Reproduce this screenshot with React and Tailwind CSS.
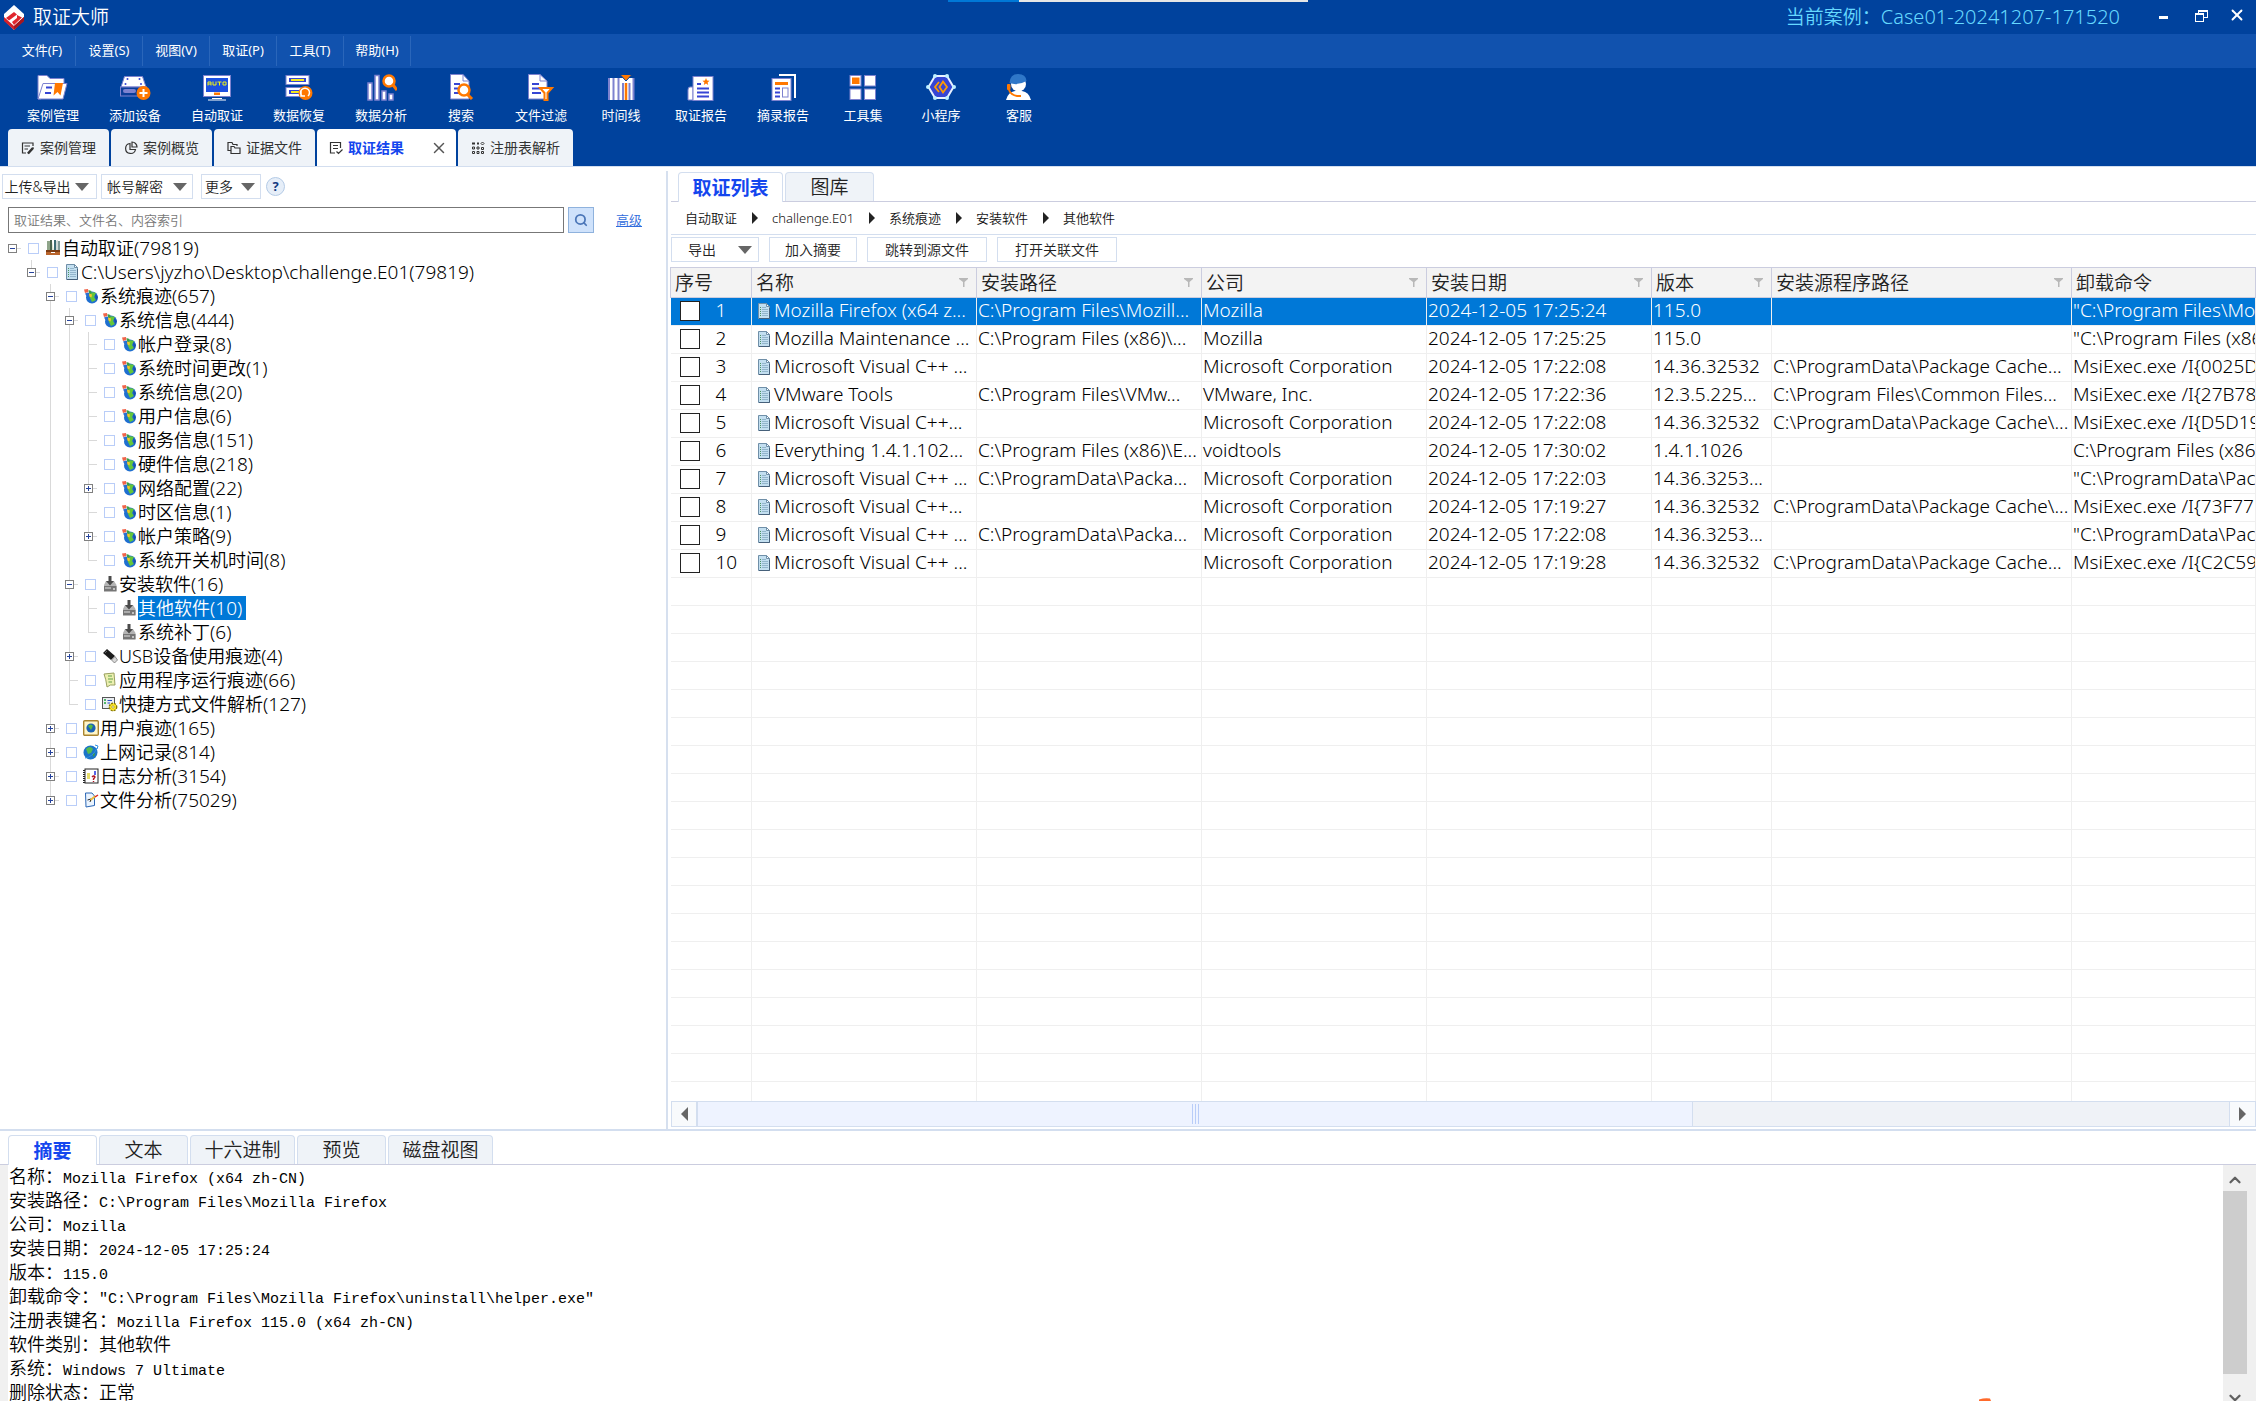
import React from "react";
import { X, ChevronUp, ChevronDown, Search } from "lucide-react";

/* ---------- toolbar icons (32 x 28) ---------- */
const P = "#7d82cf";
const B = "#3645d4";
const O = "#ff7800";

const Tool = ({ children }) => (
  <svg width="32" height="28" viewBox="0 0 32 28" aria-hidden="true">{children}</svg>
);

const toolIcons = {
  cases: (
    <Tool>
      <path d="M1 26V2.500H10L13 5.500H27V12H8L4 26Z" fill="#fff" stroke={P} />
      <path d="M6 10.500H30L26 26H1Z" fill="#fff" stroke={P} />
      <path d="M9 14.500H15M8 20H14" stroke={B} strokeWidth="2" />
      <path d="M18 10H26L23.500 22.500L20.500 19L16.500 22.500Z" fill={O} />
    </Tool>
  ),
  add: (
    <Tool>
      <path d="M5.500 3.500H23.500L27 14H2Z" fill="#fff" stroke={P} />
      <circle cx="8.500" cy="6" r="1" fill={B} /><circle cx="20.500" cy="6" r="1" fill={B} />
      <circle cx="6.500" cy="11" r="1" fill={B} /><circle cx="22" cy="11" r="1" fill={B} />
      <rect x="1.500" y="14" width="26" height="9" fill="#0b3d99" stroke={P} />
      <rect x="4" y="16" width="13" height="4" rx="2" fill={P} />
      <circle cx="24.500" cy="20" r="7" fill={O} />
      <path d="M24.500 16V24M20.500 20H28.500" stroke="#fff" strokeWidth="2" />
    </Tool>
  ),
  auto: (
    <Tool>
      <rect x="2.500" y="2.500" width="27" height="21" fill="#fff" stroke={P} />
      <rect x="5" y="5" width="22" height="14" fill="#1c50e0" />
      <path d="M7 12.500V9H10V12.500M7 11H10M12 8.500V12H15V8.500M16.500 9H20.500M18.500 9V12.500M22 9H25V12H22Z" fill="none" stroke="#f3f315" />
      <rect x="13" y="19.500" width="6" height="2.500" fill={O} />
      <path d="M11 25.500H21M7 27H25" stroke="#fff" />
    </Tool>
  ),
  recover: (
    <Tool>
      <rect x="3" y="2.500" width="23" height="9" fill="#fff" stroke={P} />
      <path d="M6 7H23" stroke={B} strokeWidth="4" />
      <path d="M8 7H21" stroke="#f4ea1f" strokeWidth="2" />
      <rect x="3" y="14.500" width="23" height="9" fill="#fff" stroke={P} />
      <path d="M6 19H16" stroke={B} strokeWidth="4" />
      <path d="M8 19H16" stroke="#f4ea1f" strokeWidth="2" />
      <circle cx="22.500" cy="20" r="7" fill={O} />
      <path d="M19 23A4.500 4.500 0 1 1 25 23M18 18V23H22" fill="none" stroke="#fff" strokeWidth="1.500" />
    </Tool>
  ),
  analyse: (
    <Tool>
      <g fill="#fff" stroke={P} strokeWidth="1.500">
        <rect x="3" y="10" width="4" height="17" />
        <rect x="10" y="2.500" width="4" height="24.500" />
        <rect x="17" y="18" width="4" height="9" />
        <rect x="24" y="21" width="4" height="6" />
      </g>
      <path d="M28 12L32 17" stroke={O} strokeWidth="3" />
      <circle cx="24" cy="8" r="5.500" fill="#fff" stroke={O} strokeWidth="2.500" />
    </Tool>
  ),
  search: (
    <Tool>
      <path d="M5.500 1.500H18L24 8V26H5.500Z" fill="#fff" stroke={P} />
      <path d="M18 1.500V8H24" fill="none" stroke={P} />
      <path d="M9 11H15M9 15.500H14M9 20H15" stroke={B} strokeWidth="1.800" />
      <path d="M22 21L27 26" stroke={O} strokeWidth="3" />
      <circle cx="19" cy="17" r="5.500" fill="#fff" stroke={O} strokeWidth="2.500" />
    </Tool>
  ),
  filter: (
    <Tool>
      <path d="M3.500 1.500H15L22 8V26H3.500Z" fill="#fff" stroke={P} />
      <path d="M15 1.500V8H22" fill="none" stroke={P} />
      <path d="M7 11H14M7 15.500H15M7 20H16" stroke={B} strokeWidth="1.800" />
      <path d="M15 15H27L22.500 20V27H19.500V20Z" fill="#fff" stroke={O} strokeWidth="2" />
    </Tool>
  ),
  timeline: (
    <Tool>
      <rect x="3" y="5" width="26" height="22" fill="#fff" />
      <path d="M4 5V27M8.500 5V27M13.500 5V27M18 10V27M24.500 10V27M28.500 5V27" stroke={P} strokeWidth="2" />
      <path d="M21 10V27" stroke={O} strokeWidth="2.500" />
      <path d="M15 1.500H27L21 8Z" fill={O} stroke="#00429d" />
    </Tool>
  ),
  report: (
    <Tool>
      <path d="M8 14H5Q3 14 3 17V27H8Z" fill="#fff" stroke={P} />
      <rect x="8" y="3.500" width="20" height="24" fill="#fff" stroke={P} />
      <path d="M12 11H16M12 15.500H24M12 19.500H24M12 23.500H24" stroke={B} strokeWidth="1.800" />
      <path d="M21 5L22 7.500L24.500 7.800L22.600 9.500L23.200 12L21 10.600L18.800 12L19.400 9.500L17.500 7.800L20 7.500Z" fill={O} />
    </Tool>
  ),
  excerpt: (
    <Tool>
      <path d="M12 2H28V25" fill="none" stroke="#fff" strokeWidth="2" />
      <rect x="5" y="5.500" width="19" height="22" fill="#fff" stroke={P} />
      <path d="M8 10.500H21" stroke={O} strokeWidth="3" />
      <path d="M8 15.500H13M8 19.500H13M8 23.500H13" stroke={B} strokeWidth="1.800" />
      <rect x="15.500" y="15" width="5.500" height="9" fill="#fff" stroke={P} />
    </Tool>
  ),
  tools: (
    <Tool>
      <g fill="#fff" stroke={P}>
        <rect x="3" y="2.500" width="11" height="10.500" /><rect x="17.500" y="2.500" width="11" height="10.500" />
        <rect x="3" y="16" width="11" height="10.500" /><rect x="17.500" y="16" width="11" height="10.500" />
      </g>
      <rect x="5" y="4.500" width="7.500" height="6.500" fill={O} />
    </Tool>
  ),
  mini: (
    <Tool>
      <path d="M10 3H22L28.500 14L22 25H10L3.500 14Z" fill={B} stroke="#e8f2ff" strokeWidth="2" />
      <g fill="#bff0ff"><circle cx="10" cy="3" r="2" /><circle cx="22" cy="3" r="2" /><circle cx="29" cy="14" r="2" /><circle cx="22" cy="25" r="2" /><circle cx="10" cy="25" r="2" /><circle cx="3" cy="14" r="2" /></g>
      <path d="M14 9L10 14L14 19M18 8.500L22 14L18 19.500L14.500 14Z" fill="none" stroke="#ff9a00" strokeWidth="1.800" />
    </Tool>
  ),
  service: (
    <Tool>
      <path d="M3 27Q5 19 12 18H19Q26 19 28 27Z" fill="#fff" />
      <circle cx="15.500" cy="11" r="7.500" fill="#fff" />
      <path d="M6.500 10Q7 1 15 1Q23 1 23.500 8Q15 13 6.500 10Z" fill="#2f77c8" />
      <rect x="4" y="11" width="3.500" height="6" rx="1" fill={O} />
      <path d="M6 17Q8 22 14 23H18" fill="none" stroke={O} strokeWidth="2" />
    </Tool>
  ),
};

const tools = [
  ["案例管理", "cases"], ["添加设备", "add"], ["自动取证", "auto"], ["数据恢复", "recover"],
  ["数据分析", "analyse"], ["搜索", "search"], ["文件过滤", "filter"], ["时间线", "timeline"],
  ["取证报告", "report"], ["摘录报告", "excerpt"], ["工具集", "tools"], ["小程序", "mini"], ["客服", "service"],
];

/* ---------- page tab icons (14 x 14) ---------- */
const Line14 = ({ children }) => (
  <svg width="14" height="14" viewBox="0 0 14 14" fill="none" stroke="#333" strokeWidth="1.200" aria-hidden="true">{children}</svg>
);
const pageTabs = [
  { label: "案例管理", icon: <Line14><path d="M5 12H1.500V2H12V5M3.500 5H9M3.500 8H7M7 12.500L12.500 6.500" /><path d="M7 12.500L12 7" strokeWidth="2.500" /></Line14> },
  { label: "案例概览", icon: <Line14><path d="M6 2.500A5 5 0 1 0 11.500 8.500H6Z" /><path d="M8 1V6H13A5 5 0 0 0 8 1Z" /></Line14> },
  { label: "证据文件", icon: <Line14><path d="M4 9.500H1V1.500H5L6 3.500H10V5" /><path d="M4 12.500V5.500H7L8 7H13V12.500Z" /></Line14> },
  { label: "取证结果", active: true, icon: <Line14><path d="M6 12H1.500V1.500H11.500V7M4 4.500H9M4 7.500H9M7.500 10.500L9.500 12.500L13.500 8.500" /></Line14> },
  { label: "注册表解析", icon: <Line14><path d="M1 2.500H4M6 2.500H8" strokeWidth="2" /><path d="M1.500 6H3.500V8H1.500ZM6 6H8V8H6ZM1.500 10.500H3.500V12.500H1.500ZM6 10.500H8V12.500H6ZM10.500 6.500H12.500V8.500H10.500ZM10.500 10.500H12.500V12.500H10.500Z" strokeWidth="1" /><path d="M11.500 1L13 2.500L11.500 4L10 2.500Z" strokeWidth="1" /></Line14> },
];

/* ---------- tree icons (16 x 16) ---------- */
const S16 = ({ children }) => (
  <svg width="16" height="16" viewBox="0 0 16 16" className="shrink-0" aria-hidden="true">{children}</svg>
);
const treeIcons = {
  shelf: <S16><path d="M2 1H5V11H2Z" fill="#8fa58a" /><path d="M5 0H7V11H5Z" fill="#49634e" /><path d="M7 1L9 11H7Z" fill="#d9e4d0" /><path d="M9 0H11V11H9Z" fill="#3b6b74" /><path d="M11 1L13 0V11H11Z" fill="#cfd9d6" /><path d="M13 1H15V11H13Z" fill="#7f9a97" /><path d="M1 10H15V15H1Z" fill="#b9642b" /><path d="M1 10H15V12H1Z" fill="#7c3c14" /><rect x="6" y="12" width="4" height="1" fill="#fff" /></S16>,
  doc: <S16><path d="M2.500 .5H10.500L13.500 3.500V15.500H2.500Z" fill="#c3dff0" stroke="#6f8fa8" /><path d="M10.500 .5V3.500H13.500Z" fill="#fff" stroke="#6f8fa8" /><path d="M13.500 5V15.500H3" fill="none" stroke="#46607a" /><path d="M4.500 4V13" stroke="#4c9560" strokeDasharray="1 1" /><path d="M6 4.500H10M6 6.500H12M6 8.500H12M6 10.500H12M6 12.500H12" stroke="#93b5cc" /></S16>,
  globe: <S16><circle cx="9" cy="9.500" r="6" fill="#1f6fd0" /><path d="M6 6Q9 3 13 5L11 9L13 12L9 14L7 10Z" fill="#63c63a" /><path d="M12 6L15 9L13 13Z" fill="#1a4fae" /><path d="M1 1.500L5 1L5.500 4L2 5Z" fill="#f0644a" /><path d="M5.500 2L8.500 3L8 6L6 5Z" fill="#3aa047" /><path d="M2 5.500L5 4.500L6 8L3.500 8Z" fill="#2d6fd0" /><path d="M6 5.500L9 6.500L8.500 9.500L6.500 8.500Z" fill="#f7c52d" /></S16>,
  disk: <S16><path d="M2 9L4 5H12L14.500 9V15H2V10Z" fill="#b4b4b4" /><path d="M2 10H14.500V15.500H2Z" fill="#767676" /><path d="M3 12H9" stroke="#e2e2e2" /><circle cx="12" cy="13" r="1" fill="#ddd" /><path d="M6.500 0H9.500V5H12L8 9.500L4 5H6.500Z" fill="#4a4a4a" /></S16>,
  usb: <S16><path d="M1 5L5 1L13 8L9 12Z" fill="#1c1c1c" /><path d="M9.500 12L13 8.500L15.500 12L12.500 15Z" fill="#d8d8d8" stroke="#666" strokeWidth=".7" /><path d="M3 5L5 3" stroke="#666" /></S16>,
  note: <S16><path d="M2 2L12 1L13 13Q8 12 5 15Q4 7 2 2Z" fill="#ecf0b0" stroke="#9aa060" /><path d="M6 4H10M6 7H11M6.500 10H10" stroke="#63a04a" /></S16>,
  link: <S16><rect x=".5" y="1.500" width="12" height="11" fill="#e9edf2" stroke="#555" /><path d="M2 4H4M2 7H4" stroke="#1ea53a" strokeWidth="1.500" /><path d="M5.500 4.500H10M5.500 7H8" stroke="#2849c0" /><circle cx="11" cy="11" r="3.700" fill="#ffe92b" stroke="#8a7a00" strokeDasharray="2 1" strokeWidth="1.400" /><circle cx="11" cy="11" r="1.200" fill="#fff" stroke="#8a7a00" strokeWidth=".6" /></S16>,
  user: <S16><rect x=".7" y=".7" width="14.600" height="14.600" rx="1" fill="#fff6c8" stroke="#a9842f" strokeWidth="1.400" /><circle cx="8" cy="8" r="4.600" fill="#1b62b5" /><path d="M5 6Q8 3 10 6L8 10Z" fill="#56b843" /></S16>,
  earth: <S16><circle cx="7.500" cy="8.500" r="7" fill="#1b74c8" /><path d="M3 5Q7 1 10 5L8 9L5 10Z" fill="#55bb50" /><path d="M9 10L12 9L11 13Z" fill="#3d9e45" /><path d="M12 1L15 2L14 5M2 14Q10 13 14 4" fill="none" stroke="#2f8fe0" /></S16>,
  log: <S16><rect x="2" y="1" width="13" height="14" fill="#fff" stroke="#222" /><path d="M1 2V15" stroke="#222" strokeWidth="2" strokeDasharray="1 1" /><rect x="4" y="5" width="3" height="6" fill="#e6dd69" /><path d="M12 3V7" stroke="#2030e0" strokeWidth="1.500" /><path d="M9 9Q11 7 12 9L10.500 11V12M10.500 13V14" fill="none" stroke="#b01020" strokeWidth="1.400" /></S16>,
  edit: <S16><path d="M2.500 1H9L11.500 4V13.500L3 15Z" fill="#eaf4ff" stroke="#2a66b5" /><path d="M4.500 8L8 7L7 10" fill="none" stroke="#222" /><path d="M7.500 8L12.500 4" stroke="#e9b93a" strokeWidth="2" /><path d="M12 5L15 3" stroke="#d22" strokeWidth="1.500" /></S16>,
};

/* level, state, icon, name, count, last sibling */
const tree = [
  [0, "-", "shelf", "自动取证", 79819],
  [1, "-", "doc", "C:\\Users\\jyzho\\Desktop\\challenge.E01", 79819, true],
  [2, "-", "globe", "系统痕迹", 657],
  [3, "-", "globe", "系统信息", 444],
  [4, "", "globe", "帐户登录", 8],
  [4, "", "globe", "系统时间更改", 1],
  [4, "", "globe", "系统信息", 20],
  [4, "", "globe", "用户信息", 6],
  [4, "", "globe", "服务信息", 151],
  [4, "", "globe", "硬件信息", 218],
  [4, "+", "globe", "网络配置", 22],
  [4, "", "globe", "时区信息", 1],
  [4, "+", "globe", "帐户策略", 9],
  [4, "", "globe", "系统开关机时间", 8, true],
  [3, "-", "disk", "安装软件", 16],
  [4, "", "disk", "其他软件", 10],
  [4, "", "disk", "系统补丁", 6, true],
  [3, "+", "usb", "USB设备使用痕迹", 4],
  [3, "", "note", "应用程序运行痕迹", 66],
  [3, "", "link", "快捷方式文件解析", 127, true],
  [2, "+", "user", "用户痕迹", 165],
  [2, "+", "earth", "上网记录", 814],
  [2, "+", "log", "日志分析", 3154],
  [2, "+", "edit", "文件分析", 75029, true],
];

function Pipe({ visible }) {
  return (
    <span className="flex h-6 w-[19px] shrink-0 justify-center">
      {visible && <span className="w-px bg-[#d9d9d9]" />}
    </span>
  );
}

function Joint({ level, state, last }) {
  return (
    <svg width="19" height="24" viewBox="0 0 19 24" className="shrink-0" shapeRendering="crispEdges" aria-hidden="true">
      {level > 0 && <path d="M9.500 0V12" stroke="#d9d9d9" />}
      {level > 0 && !last && <path d="M9.500 12V24" stroke="#d9d9d9" />}
      <path d="M9 12.500H18" stroke="#d9d9d9" />
      {state && <rect x="5.500" y="8.500" width="8" height="8" fill="#fff" stroke="#808080" />}
      {state && <path d="M7 12.500H12" stroke="#26439c" />}
      {state === "+" && <path d="M9.500 10V15" stroke="#26439c" />}
    </svg>
  );
}

function TreeRow({ row, index }) {
  const [level, state, icon, name, count, last] = row;
  const selected = index === 15;
  return (
    <li role="treeitem" aria-level={level + 1} aria-selected={selected} className="flex h-6 items-center pl-[3px]">
      {Array.from({ length: level }, (_, k) => <Pipe key={k} visible={k >= 2} />)}
      {state ? (
        <button type="button" aria-label={(state === "+" ? "展开 " : "折叠 ") + name} className="h-6 w-[19px] shrink-0">
          <Joint level={level} state={state} last={last} />
        </button>
      ) : (
        <Joint level={level} state={state} last={last} />
      )}
      <input id={"node" + index} type="checkbox" className="mx-1.5 size-[11px] shrink-0 appearance-none border border-[#b9cdf8] bg-white checked:bg-[#0078d7]" />
      {treeIcons[icon]}
      <label
        htmlFor={"node" + index}
        className={selected ? "ml-px h-6 bg-[#0078d7] pr-1 leading-6 whitespace-nowrap text-white" : "ml-px h-6 leading-6 whitespace-nowrap"}
      >
        <span className={level === 1 ? "text-[19px]" : ""}>{name}</span>
        <span className="text-[19px]">({count})</span>
      </label>
    </li>
  );
}

/* ---------- result table ---------- */
const columns = ["序号", "名称", "安装路径", "公司", "安装日期", "版本", "安装源程序路径", "卸载命令"];
const rows = [
  ["Mozilla Firefox (x64 z...", "C:\\Program Files\\Mozill...", "Mozilla", "2024-12-05 17:25:24", "115.0", "", "\"C:\\Program Files\\Mo"],
  ["Mozilla Maintenance ...", "C:\\Program Files (x86)\\...", "Mozilla", "2024-12-05 17:25:25", "115.0", "", "\"C:\\Program Files (x86"],
  ["Microsoft Visual C++ ...", "", "Microsoft Corporation", "2024-12-05 17:22:08", "14.36.32532", "C:\\ProgramData\\Package Cache...", "MsiExec.exe /I{0025D"],
  ["VMware Tools", "C:\\Program Files\\VMw...", "VMware, Inc.", "2024-12-05 17:22:36", "12.3.5.225...", "C:\\Program Files\\Common Files...", "MsiExec.exe /I{27B78"],
  ["Microsoft Visual C++...", "", "Microsoft Corporation", "2024-12-05 17:22:08", "14.36.32532", "C:\\ProgramData\\Package Cache\\...", "MsiExec.exe /I{D5D19"],
  ["Everything 1.4.1.102...", "C:\\Program Files (x86)\\E...", "voidtools", "2024-12-05 17:30:02", "1.4.1.1026", "", "C:\\Program Files (x86"],
  ["Microsoft Visual C++ ...", "C:\\ProgramData\\Packa...", "Microsoft Corporation", "2024-12-05 17:22:03", "14.36.3253...", "", "\"C:\\ProgramData\\Pac"],
  ["Microsoft Visual C++...", "", "Microsoft Corporation", "2024-12-05 17:19:27", "14.36.32532", "C:\\ProgramData\\Package Cache\\...", "MsiExec.exe /I{73F77"],
  ["Microsoft Visual C++ ...", "C:\\ProgramData\\Packa...", "Microsoft Corporation", "2024-12-05 17:22:08", "14.36.3253...", "", "\"C:\\ProgramData\\Pac"],
  ["Microsoft Visual C++ ...", "", "Microsoft Corporation", "2024-12-05 17:19:28", "14.36.32532", "C:\\ProgramData\\Package Cache...", "MsiExec.exe /I{C2C59"],
];
const emptyRows = Array.from({ length: 20 }, (_, i) => i);

const Down = () => (
  <svg width="14" height="8" viewBox="0 0 14 8" className="shrink-0" aria-hidden="true"><path d="M0 0H14L7 8Z" fill="#666" /></svg>
);
const Funnel = () => (
  <svg width="9" height="9" viewBox="0 0 9 9" className="shrink-0" aria-hidden="true"><path d="M0 0H9V1L5.500 4V9H4V4L0 1Z" fill="#b8b8b8" /></svg>
);

function ResultTable() {
  return (
    <div className="ml-0.5 min-h-0 flex-1 overflow-hidden">
      <table className="w-full min-w-[1585px] table-fixed border-collapse text-[19px]">
        <colgroup>
          <col className="w-[81px]" /><col className="w-[225px]" /><col className="w-[225px]" /><col className="w-[225px]" />
          <col className="w-[225px]" /><col className="w-[120px]" /><col className="w-[300px]" /><col />
        </colgroup>
        <thead>
          <tr className="h-[30px] bg-[#f3f3f3] text-[#222]">
            {columns.map((c, i) => (
              <th key={c} scope="col" className="overflow-hidden border border-[#cbcddf] p-0 text-left font-[350]">
                <span className="flex h-[29px] items-center justify-between pr-2 pl-1 leading-7 whitespace-nowrap">
                  {c}
                  {i > 0 && i < 7 && <Funnel />}
                </span>
              </th>
            ))}
          </tr>
        </thead>
        <tbody>
          {rows.map((r, i) => (
            <tr key={i} className={i === 0 ? "h-7 bg-[#0078d7] text-white" : "h-7 text-black"}>
              <td className="border-r border-b border-[#efefef] p-0 pb-0.5">
                <span className="flex items-center gap-4 pl-[9px]">
                  <input type="checkbox" aria-label={"选择第 " + (i + 1) + " 行"} className="size-5 appearance-none border border-[#222] bg-white checked:bg-[#0078d7]" />
                  <span className="leading-[25px]">{i + 1}</span>
                </span>
              </td>
              <td className="overflow-hidden border-r border-b border-[#efefef] p-0 pb-0.5">
                <span className="flex items-center gap-0.5 pl-1 leading-[25px] whitespace-nowrap">
                  {treeIcons.doc}
                  {r[0]}
                </span>
              </td>
              {r.slice(1).map((v, k) => (
                <td key={k} className="overflow-hidden border-r border-b border-[#efefef] p-0 pb-0.5 pl-px leading-[25px] whitespace-nowrap">{v}</td>
              ))}
            </tr>
          ))}
          {emptyRows.map((n) => (
            <tr key={"e" + n} className="h-7">
              {columns.map((c) => <td key={c} className="border-r border-b border-[#efefef] p-0" />)}
            </tr>
          ))}
        </tbody>
      </table>
    </div>
  );
}

const crumbs = ["自动取证", "challenge.E01", "系统痕迹", "安装软件", "其他软件"];
const actions = [["加入摘要", "w-[88px]"], ["跳转到源文件", "w-[120px]"], ["打开关联文件", "w-[120px]"]];
const detailTabs = [["摘要", "w-[89px]"], ["文本", "w-[89px]"], ["十六进制", "w-[105px]"], ["预览", "w-[89px]"], ["磁盘视图", "w-[105px]"]];
const details = [
  ["名称：", "Mozilla Firefox (x64 zh-CN)"],
  ["安装路径：", "C:\\Program Files\\Mozilla Firefox"],
  ["公司：", "Mozilla"],
  ["安装日期：", "2024-12-05 17:25:24"],
  ["版本：", "115.0"],
  ["卸载命令：", "\"C:\\Program Files\\Mozilla Firefox\\uninstall\\helper.exe\""],
  ["注册表键名：", "Mozilla Firefox 115.0 (x64 zh-CN)"],
  ["软件类别：其他软件", ""],
  ["系统：", "Windows 7 Ultimate"],
  ["删除状态：正常", ""],
];

const btn = "flex h-[25px] items-center justify-center border border-[#d3deef] bg-white text-sm text-[#222]";

export default function App() {
  return (
    <div className="relative flex h-screen flex-col overflow-hidden bg-white font-['Noto_Sans','Noto_Sans_CJK_SC',sans-serif] text-lg font-[350] text-black">
      {/* screen-share strip over the title bar */}
      <div className="absolute top-0 left-[42%] flex h-0.5 w-[16%]">
        <span className="w-[72px] bg-[#0078d7]" />
        <span className="w-[290px] bg-[#e6e6e6]" />
      </div>

      <header className="shrink-0 bg-[#00429d] text-white">
        <div className="flex h-[34px] items-center pl-1">
          <svg width="20" height="25" viewBox="0 0 20 25" aria-hidden="true">
            <path d="M10 0L20 9V15L10 25L0 15V9Z" fill="#fff" />
            <path d="M0 12L10 21V25L0 16ZM20 12L10 21V25L20 16Z" fill="#d3202a" />
            <path d="M0 10L10 3L20 10L16 13L10 8.500L4 13Z" fill="#fff" />
            <path d="M2 13L10 7L13 9.500L5 15.500ZM8 17L13 13V10L18 12.500L10 20Z" fill="#e0262d" />
            <path d="M10 21L20 12V16L10 25Z" fill="#a5161f" />
          </svg>
          <h1 className="ml-[9px] text-[19px] leading-7">取证大师</h1>
          <p className="ml-auto text-[19px] leading-7 whitespace-nowrap text-[#66d9ff]">当前案例：<span className="text-xl leading-7">Case01-20241207-171520</span></p>
          <button type="button" aria-label="最小化" className="ml-7 flex size-[30px] items-center justify-center">
            <span className="h-[3px] w-[9px] bg-white" />
          </button>
          <button type="button" aria-label="还原" className="ml-2 flex h-[30px] w-[30px] items-center justify-center self-start">
            <svg width="13" height="13" viewBox="0 0 13 13" fill="none" stroke="#fff" shapeRendering="crispEdges" aria-hidden="true">
              <path d="M3.500 4V1.500H12.500V8.500H9" /><path d="M3 1.500H13" strokeWidth="2" />
              <rect x=".5" y="4.500" width="8" height="8" /><path d="M0 5H9" strokeWidth="2" />
            </svg>
          </button>
          <button type="button" aria-label="关闭" className="mr-1 ml-1.5 flex h-[30px] w-[30px] items-center justify-center self-start">
            <X size={18} strokeWidth={2.500} />
          </button>
        </div>

        <nav className="flex h-[34px] items-center bg-[#1152ae] pl-[9px] text-[13px] font-normal">
          {["文件(F)", "设置(S)", "视图(V)", "取证(P)", "工具(T)", "帮助(H)"].map((m) => (
            <button key={m} type="button" className="h-[30px] min-w-[67px] border-r border-[#2a66ba] px-[11px] pb-0.5 whitespace-nowrap">{m}</button>
          ))}
        </nav>

        <div className="flex h-[61px] pt-[5px] pl-3 text-[13px] font-normal">
          {tools.map(([label, icon]) => (
            <button key={label} type="button" className="flex min-w-[78px] flex-col items-center gap-1.5 px-[15px] leading-4 whitespace-nowrap">
              {toolIcons[icon]}
              {label}
            </button>
          ))}
        </div>

        <div role="tablist" className="flex h-[37px] gap-0.5 pl-2 text-sm font-normal text-[#333]">
          {pageTabs.map((t) =>
            t.active ? (
              <div key={t.label} className="flex w-[139px] items-center justify-between rounded-t-sm bg-white px-2">
                <button type="button" role="tab" aria-selected="true" className="flex items-center gap-[5px] pl-1 font-bold text-[#1446ee]">{t.icon}{t.label}</button>
                <button type="button" aria-label="关闭标签"><X size={18} color="#555" /></button>
              </div>
            ) : (
              <button key={t.label} type="button" role="tab" aria-selected="false" className="flex items-center gap-[5px] rounded-t-sm bg-[#eff3f8] px-[13px]">{t.icon}{t.label}</button>
            )
          )}
        </div>
      </header>

      <main className="flex min-h-0 flex-1 border-t border-[#d3deef]">
        <section className="flex w-[666px] shrink-0 flex-col pt-[7px]">
          <div className="flex h-[25px] items-center pl-0.5">
            <button type="button" className={btn + " w-[95px] gap-1 pr-1.5"}>上传&amp;导出<Down /></button>
            <button type="button" className={btn + " ml-1 w-[92px] gap-2.5"}>帐号解密<Down /></button>
            <button type="button" className={btn + " ml-2 w-[60px] gap-2 pr-0.5"}>更多<Down /></button>
            <button type="button" aria-label="帮助" className="ml-[5px] flex size-[19px] items-center justify-center rounded-full border border-[#b4cbe6] bg-[#e6eef8] text-[13px] leading-none font-bold text-[#143a80]">?</button>
          </div>
          <div className="mt-2 flex h-[26px] items-center pl-2">
            <input type="text" aria-label="搜索取证结果" placeholder="取证结果、文件名、内容索引" className="h-full w-[556px] border border-[#777] px-[5px] text-[13px] placeholder:text-[#777]" />
            <button type="button" aria-label="搜索" className="ml-1 flex size-[26px] items-center justify-center border border-[#8fb2dd] bg-[#cfe2fb]">
              <Search size={14} strokeWidth={3} color="#4b76b8" />
            </button>
            <a href="#advanced" className="ml-[22px] text-[13px] text-[#2f6bdc] underline">高级</a>
          </div>
          <ul role="tree" className="mt-[3px] min-h-0 flex-1 overflow-hidden">
            {tree.map((r, i) => <TreeRow key={i} row={r} index={i} />)}
          </ul>
        </section>

        <div className="mt-1 w-0.5 shrink-0 bg-[#d6e0ef]" />

        <section className="flex min-w-0 flex-1 flex-col pt-[5px]">
          <div role="tablist" className="ml-[3px] flex h-[30px] shrink-0 items-stretch gap-0.5 border-b border-[#cbcddf] pl-[7px]">
            <button type="button" role="tab" aria-selected="true" className="-mb-px w-[105px] rounded-t border border-b-0 border-[#d3deef] bg-white text-[19px] leading-7 font-bold text-[#1446ee]">取证列表</button>
            <button type="button" role="tab" aria-selected="false" className="w-[89px] rounded-t border border-b-0 border-[#d3deef] bg-[#eff3f8] text-[19px] leading-7 text-[#222]">图库</button>
          </div>
          <nav className="ml-[3px] flex h-[33px] shrink-0 items-center border-b border-[#d3deef] pl-3.5 text-[13px] text-[#111]">
            {crumbs.map((c, i) => (
              <React.Fragment key={c}>
                {i > 0 && (
                  <svg width="6" height="12" viewBox="0 0 6 12" className="mr-3.5 ml-[15px]" aria-hidden="true"><path d="M0 0L6 6L0 12Z" fill="#222" /></svg>
                )}
                <a href="#crumb">{c}</a>
              </React.Fragment>
            ))}
          </nav>
          <div className="mt-0.5 mb-[5px] ml-[3px] flex shrink-0 gap-2.5">
            <button type="button" className={btn + " w-[88px] gap-[22px] pl-2.5"}>导出<Down /></button>
            {actions.map(([a, w]) => <button key={a} type="button" className={btn + " " + w}>{a}</button>)}
          </div>
          <ResultTable />
          <div className="mb-0.5 ml-[3px] flex h-[26px] shrink-0 border border-[#d3deef] bg-[#eff2f7]">
            <button type="button" aria-label="向左滚动" className="flex w-[26px] items-center justify-center border-r-2 border-[#d3deef] bg-[#f8fafc]">
              <svg width="7" height="14" viewBox="0 0 7 14" aria-hidden="true"><path d="M7 0L0 7L7 14Z" fill="#666" /></svg>
            </button>
            <div className="flex flex-1">
              <div className="flex w-[65%] items-center justify-center gap-0.5 border-r border-[#d3deef] bg-[#eef3ff]">
                <span className="h-5 w-px bg-[#b9cdf8]" /><span className="h-5 w-px bg-[#b9cdf8]" /><span className="h-5 w-px bg-[#b9cdf8]" />
              </div>
            </div>
            <button type="button" aria-label="向右滚动" className="flex w-[26px] items-center justify-center border-l border-[#d3deef] bg-[#f8fafc]">
              <svg width="7" height="14" viewBox="0 0 7 14" aria-hidden="true"><path d="M0 0L7 7L0 14Z" fill="#666" /></svg>
            </button>
          </div>
        </section>
      </main>

      <footer className="flex h-[272px] shrink-0 flex-col border-t-2 border-[#d3deef]">
        <div role="tablist" className="mt-1 flex h-[30px] shrink-0 gap-0.5 border-b border-[#cbcddf] pl-2 text-[19px]">
          {detailTabs.map(([t, w], i) => (
            <button
              key={t}
              type="button"
              role="tab"
              aria-selected={i === 0}
              className={w + (i === 0
                ? " -mb-px rounded-t border border-b-0 border-[#d3deef] bg-white leading-7 font-bold text-[#1446ee]"
                : " rounded-t border border-b-0 border-[#d3deef] bg-[#eff3f8] leading-7 text-[#222]")}
            >
              {t}
            </button>
          ))}
        </div>
        <div className="flex min-h-0 flex-1 overflow-hidden">
          <div className="w-2 shrink-0 bg-[#f0f0f0]" />
          <div className="min-w-0 flex-1 pl-px">
            {details.map(([k, v]) => (
              <p key={k} className="flex h-6 items-baseline leading-[22px] whitespace-pre">
                <span>{k}</span>
                <span className="font-['Liberation_Mono',monospace] text-[15px] leading-[22px] font-normal">{v}</span>
              </p>
            ))}
          </div>
          <svg width="12" height="3" viewBox="0 0 12 3" className="mr-[232px] shrink-0 self-end" aria-hidden="true"><path d="M0 1.500Q6 -.5 11 .5L12 3H0Z" fill="#ff6a2b" /></svg>
          <div className="flex w-[33px] shrink-0 flex-col bg-[#f0f0f0]">
            <button type="button" aria-label="向上滚动" className="flex h-[26px] w-6 shrink-0 items-center justify-center pt-1"><ChevronUp size={18} strokeWidth={3} color="#606060" /></button>
            <div className="w-6 flex-1 bg-[#cdcdcd]" />
            <button type="button" aria-label="向下滚动" className="flex h-[27px] w-6 shrink-0 items-end justify-center"><ChevronDown size={18} strokeWidth={3} color="#606060" className="-mb-1.5" /></button>
          </div>
        </div>
      </footer>
    </div>
  );
}
